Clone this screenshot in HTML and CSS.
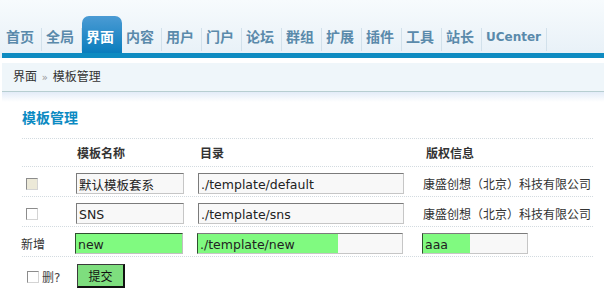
FILE: index.html
```html
<!DOCTYPE html>
<html lang="zh-CN">
<head>
  <meta charset="UTF-8" />
  <title>模板管理</title>
  <link rel="stylesheet" href="styles.css">
</head>
<body>
  <div class="topnav">
    <ul class="tabs">
      <li><a href="#">首页</a></li>
      <li><a href="#">全局</a></li>
      <li><a href="#" class="active">界面</a></li>
      <li><a href="#">内容</a></li>
      <li><a href="#">用户</a></li>
      <li><a href="#">门户</a></li>
      <li><a href="#">论坛</a></li>
      <li><a href="#">群组</a></li>
      <li><a href="#">扩展</a></li>
      <li><a href="#">插件</a></li>
      <li><a href="#">工具</a></li>
      <li><a href="#">站长</a></li>
      <li><a href="#" class="uc">UCenter</a></li>
    </ul>
  </div>
  <div class="crumb">界面 <span class="raquo">&raquo;</span> 模板管理</div>
  <div class="content">
    <h3>模板管理</h3>
    <div class="tpl">
      <div class="row head">
        <div class="c1"></div>
        <div class="c2">模板名称</div>
        <div class="c3">目录</div>
        <div class="c4">版权信息</div>
      </div>
      <div class="row">
        <div class="c1"><input type="checkbox" class="chk" disabled></div>
        <div class="c2"><input class="txt w1" value="默认模板套系"></div>
        <div class="c3"><input class="txt w2" value="./template/default"></div>
        <div class="c4">康盛创想（北京）科技有限公司</div>
      </div>
      <div class="row">
        <div class="c1"><input type="checkbox" class="chk"></div>
        <div class="c2"><input class="txt w1" value="SNS"></div>
        <div class="c3"><input class="txt w2" value="./template/sns"></div>
        <div class="c4">康盛创想（北京）科技有限公司</div>
      </div>
      <div class="row">
        <div class="c1 add">新增</div>
        <div class="c2"><input class="txt w1 hl-full" value="new"></div>
        <div class="c3"><input class="txt w2 hl hl-dir" value="./template/new"></div>
        <div class="c4"><input class="txt w3 hl hl-aaa" value="aaa"></div>
      </div>
    </div>
    <div class="foot">
      <label class="del"><input type="checkbox" class="chk">删?</label>
      <button class="btn">提交</button>
    </div>
  </div>
</body>
</html>
```

FILE: styles.css
```css
body {
  margin: 0;
  font: 12px "DejaVu Sans", Verdana, "Noto Sans CJK SC", sans-serif;
  color: #333;
  background: #fff;
}
.topnav {
  padding-top: 16px;
  background: linear-gradient(#f7fbfd, #e7f0f7);
}
.tabs {
  list-style: none;
  margin: 0 0 0 2px;
  padding: 0;
  display: flex;
  border-bottom: 5px solid #0e8bc1;
}
.tabs a {
  display: block;
  box-sizing: border-box;
  height: 37px;
  padding: 11px 8px 0 4px;
  font-size: 14px;
  line-height: 20px;
  font-weight: bold;
  color: #5a8aab;
  text-decoration: none;
  background: linear-gradient(#d2e1eb, #d2e1eb) right 0 bottom 2px / 1px 23px no-repeat;
}
.tabs a.active {
  color: #fff;
  background: linear-gradient(#4b9bd4, #0a7dbd);
  border-radius: 7px 7px 0 0;
}
.tabs a.uc {
  font-size: 12px;
  padding-right: 6px;
}
.crumb {
  margin: 5px 0 0 2px;
  height: 28px;
  line-height: 28px;
  padding-left: 11px;
  background: #eff6fa;
  border-bottom: 1px solid #b7ced1;
}
.raquo {
  color: #999;
  font-size: 10px;
  margin: 0 1px;
}
.content {
  padding: 16px 11px 0 22px;
  background: linear-gradient(#e3ecf8, #fff) 2px 0 / 100% 10px no-repeat;
}
h3 {
  margin: 0;
  font-size: 14px;
  line-height: 20px;
  color: #0b8ac2;
  padding-bottom: 10px;
  border-bottom: 1px dotted #d3dbe0;
}
.row {
  display: flex;
  align-items: center;
  box-sizing: border-box;
  height: 30px;
  padding-top: 4px;
  border-bottom: 1px dotted #d3dbe0;
}
.row.head {
  height: 28px;
  padding-top: 0;
  font-weight: bold;
}
.c1 { width: 54px; padding-left: 4px; box-sizing: border-box; }
.c2 { width: 122px; }
.c3 { width: 225px; }
.c4 { flex: 1; }
.head .c2, .head .c3, .head .c4 { padding-left: 1px; }
.c1.add { padding-left: 0; margin-left: -1px; }
.chk {
  appearance: none;
  display: block;
  width: 12px;
  height: 12px;
  margin: 0;
  border: 1px solid;
  border-color: #8c8c8c #d4d4d4 #d4d4d4 #8c8c8c;
  background: #fff;
}
.chk:disabled {
  background: #ece9d8;
}
.txt {
  box-sizing: border-box;
  display: block;
  height: 21px;
  margin: 0;
  padding: 1px 2px 0;
  border: 1px solid;
  border-color: #7b7b7b #c6c6c6 #c6c6c6 #7b7b7b;
  background: #f8f8f8;
  font: 12.5px "DejaVu Sans", Verdana, "Noto Sans CJK SC", sans-serif;
  color: #222;
  outline: none;
}
.w1 { width: 108px; }
.w2 { width: 206px; }
.w3 { width: 106px; }
.hl-full {
  background: #80fa80;
  border-color: #2f4f2f #c0c0c0 #c0c0c0 #2f4f2f;
}
.hl {
  border-left-color: #2f4f2f;
}
.hl-dir {
  background: linear-gradient(to right, #80fa80 140px, #f8f8f8 140px);
}
.hl-aaa {
  background: linear-gradient(to right, #80fa80 47px, #f8f8f8 47px);
}
.foot {
  display: flex;
  align-items: center;
  padding-top: 7px;
}
.del {
  display: flex;
  align-items: center;
  gap: 3px;
  width: 55px;
  padding-left: 5px;
  box-sizing: border-box;
  color: #444;
}
.del .chk {
  margin-top: 2px;
}
.btn {
  box-sizing: border-box;
  width: 48px;
  height: 24px;
  margin: 0;
  padding: 0;
  background: #7ede7e;
  border: 1px solid #3a3a3a;
  border-right: 2px solid #111;
  border-bottom: 2px solid #111;
  font: 12px "DejaVu Sans", "Noto Sans CJK SC", sans-serif;
  color: #111;
}
```
